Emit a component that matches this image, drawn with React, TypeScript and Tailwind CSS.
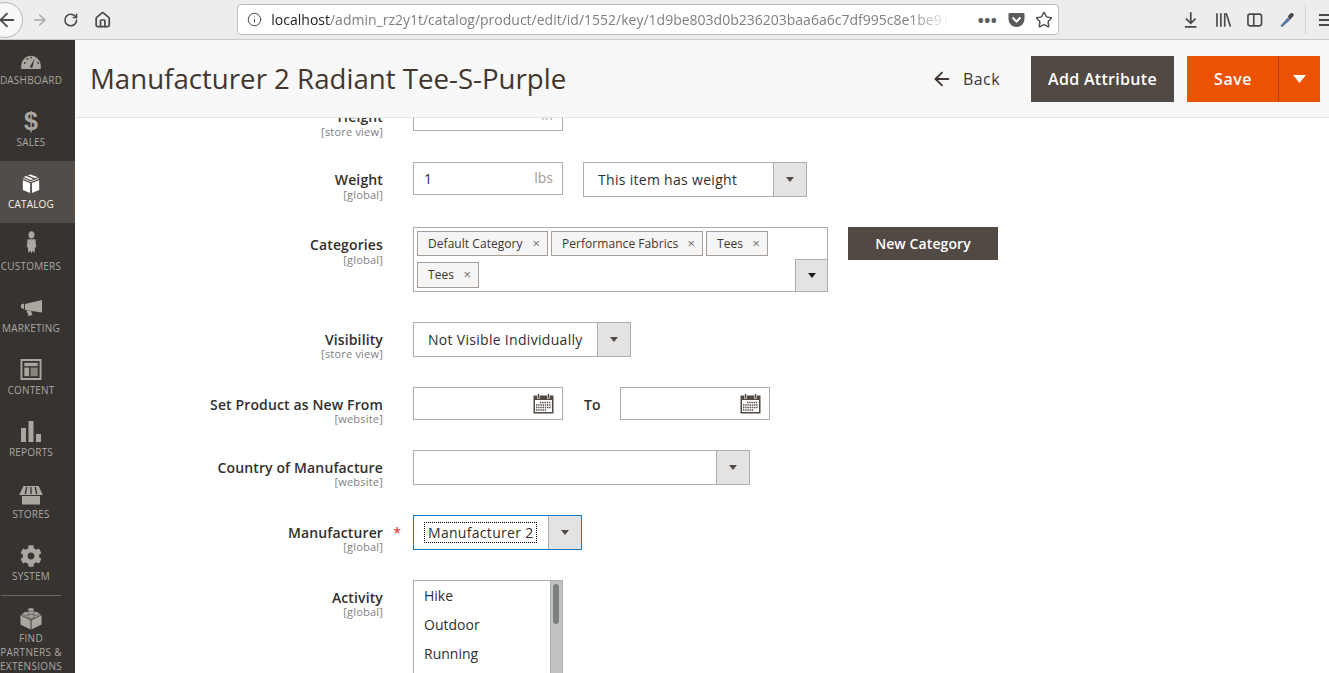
import type { ReactNode } from "react";
import { ArrowLeft, ArrowRight, House, Info, RotateCw, Star } from "lucide-react";
import { FaCog } from "react-icons/fa";

const fieldBorder = "border border-[#adadad]";

function Dashboard() {
  return (
    <svg width="22" height="16" viewBox="0 0 24 18">
      <path d="M1 17 V13 A11 11 0 0 1 23 13 V17 Z" fill="#aaa6a0" />
      <path d="M10.5 15 L16 5 L13.5 15.5 Z" fill="#373330" />
      <circle cx="5" cy="10" r="1" fill="#373330" />
      <circle cx="8" cy="5.5" r="1" fill="#373330" />
      <circle cx="12" cy="4" r="1" fill="#373330" />
      <circle cx="20" cy="10" r="1" fill="#373330" />
    </svg>
  );
}

function Box() {
  return (
    <svg width="20" height="20" viewBox="0 0 20 22" fill="#fff">
      <path d="M1 7 L9 10 V21 L1 17.5 Z" />
      <path d="M11 10 L19 7 V17.5 L11 21 Z" />
      <path d="M6.5 1.5 L9.5 0.5 L17.5 3.6 L14.5 4.8 Z" />
      <path d="M4.5 2.2 L12.6 5.5 L10 6.6 L2 3.4 Z" />
      <path d="M1.5 4.4 L10 8 L18.5 4.5 L18.5 5.5 L10 8.8 L1.5 5.5 Z" />
    </svg>
  );
}

function Person() {
  return (
    <svg width="11" height="23" viewBox="0 0 14 24" preserveAspectRatio="none" fill="#aaa6a0" className="mb-[2px]">
      <circle cx="7" cy="4" r="3.8" />
      <path d="M2 8.5 H12 L13 17 H11.5 L11 23 L8.5 20.5 L7 23.5 L5.5 20.5 L3 23 L2.5 17 H1 Z" />
    </svg>
  );
}

function Megaphone() {
  return (
    <svg width="21" height="16" viewBox="0 0 21 16" fill="#aaa6a0" className="mb-[2px]">
      <path d="M0 4.5 L3 3.5 V9 L0 8 Z" />
      <path d="M4 4 L21 0 V12.5 L4 10 Z" />
      <path d="M5.5 10.5 L10 11 L11.5 15 L7.5 16 Z" />
    </svg>
  );
}

function Content() {
  return (
    <svg width="22" height="21" viewBox="0 0 22 22" fill="#aaa6a0">
      <path fillRule="evenodd" d="M0 0 H22 V22 H0 Z M2 2 V20 H20 V2 Z" />
      <rect x="4" y="4" width="14" height="3.5" />
      <rect x="4" y="9" width="5" height="9" />
      <rect x="10.5" y="9" width="7.5" height="9" opacity="0.7" />
    </svg>
  );
}

function Reports() {
  return (
    <svg width="20" height="21" viewBox="0 0 20 21" fill="#aaa6a0">
      <rect x="0" y="7" width="5" height="14" />
      <rect x="7.5" y="0" width="5" height="21" />
      <rect x="15" y="13" width="5" height="8" />
    </svg>
  );
}

function Stores() {
  return (
    <svg width="24" height="19" viewBox="0 0 25 20" fill="#aaa6a0" className="-mb-px">
      <path d="M4.5 0 H20.5 L25 9.5 H0 Z" />
      <path d="M8 1 L6.5 8.5 M12.5 1 V8.5 M17 1 L18.5 8.5" stroke="#373330" strokeWidth="1.4" />
      <path d="M3 10.5 H22 V19.5 H3 Z" />
    </svg>
  );
}

function Lego() {
  return (
    <svg width="22" height="23" viewBox="0 0 24 25" fill="#aaa6a0">
      <path d="M0.5 9 L11.5 14.5 V24.5 L0.5 19 Z" />
      <path d="M12.5 14.5 L23.5 9 V19 L12.5 24.5 Z" />
      <path d="M12 3 L23 8.5 L12 13.5 L1 8.5 Z" />
      <ellipse cx="12" cy="2.8" rx="3.4" ry="2" stroke="#373330" strokeWidth="0.6" />
      <ellipse cx="6.5" cy="7" rx="3.4" ry="2" stroke="#373330" strokeWidth="0.6" />
      <ellipse cx="17.5" cy="7" rx="3.4" ry="2" stroke="#373330" strokeWidth="0.6" />
      <ellipse cx="12" cy="10" rx="3.4" ry="2" stroke="#373330" strokeWidth="0.6" />
    </svg>
  );
}

function Calendar() {
  return (
    <svg width="21" height="21" viewBox="0 0 21 21">
      <rect x="0.5" y="2.5" width="20" height="18" fill="#514943" />
      <rect x="2" y="7" width="17" height="12" fill="#fff" />
      <rect x="4.5" y="0.5" width="2" height="5" fill="#514943" stroke="#fff" strokeWidth="0.6" />
      <rect x="14.5" y="0.5" width="2" height="5" fill="#514943" stroke="#fff" strokeWidth="0.6" />
      <path d="M7 9.5 H18 M3 12 H18 M3 14.5 H18 M3 17 H14" stroke="#514943" strokeWidth="1.4" strokeDasharray="1.4 0.8" />
    </svg>
  );
}

function Caret({ color = "#514943", width = 8, height = 5 }: { color?: string; width?: number; height?: number }) {
  return (
    <svg width={width} height={height} viewBox="0 0 9 6" preserveAspectRatio="none">
      <path d="M0 0 H9 L4.5 6 Z" fill={color} />
    </svg>
  );
}

function NavItem({ label, icon, active }: { label: ReactNode; icon: ReactNode; active?: boolean }) {
  return (
    <div className={`h-[62px] shrink-0 ${active ? "bg-[#524d49] text-[#f7f3eb]" : "text-[#aaa6a0]"}`}>
      <div className="flex h-full w-[62px] flex-col items-center justify-end pb-[12px]">
        <div className="flex h-[26px] items-end">{icon}</div>
        <div className="mt-[3px] text-[10px] leading-[14px] tracking-[0.2px] whitespace-nowrap">{label}</div>
      </div>
    </div>
  );
}

function Sidebar() {
  return (
    <aside className="flex w-[75px] shrink-0 flex-col overflow-hidden bg-[#373330]">
      <div className="-mt-[3px] flex flex-col">
        <NavItem label="DASHBOARD" icon={<Dashboard />} />
        <NavItem
          label="SALES"
          icon={<span className="font-['Liberation_Sans',sans-serif] text-[25px] leading-[22px] font-bold">$</span>}
        />
        <NavItem label="CATALOG" icon={<Box />} active />
        <NavItem label="CUSTOMERS" icon={<Person />} />
        <NavItem label="MARKETING" icon={<Megaphone />} />
        <NavItem label="CONTENT" icon={<Content />} />
        <NavItem label="REPORTS" icon={<Reports />} />
        <NavItem label="STORES" icon={<Stores />} />
        <NavItem label="SYSTEM" icon={<FaCog size={22} className="-mb-px" />} />
      </div>
      <div className="ml-px h-px w-[60px] bg-[#6b6763]" />
      <div className="mt-[11px] flex w-[62px] flex-col items-center text-[#aaa6a0]">
        <Lego />
        <div className="mt-[1px] text-center text-[10px] leading-[14px] tracking-[0.3px] whitespace-nowrap">
          FIND
          <br />
          PARTNERS &amp;
          <br />
          EXTENSIONS
        </div>
      </div>
    </aside>
  );
}

function BrowserBar() {
  return (
    <header className="relative flex h-[40px] shrink-0 items-center border-b border-[#c9c9c9] bg-[#ededed] text-[#4a4a4a]">
      <div className="absolute top-[2px] -left-[13px] flex h-[36px] w-[36px] items-center justify-end rounded-full border border-[#b5b5b5] bg-[#f8f8f8] pr-[4px]">
        <ArrowLeft size={22} strokeWidth={2} />
      </div>
      <ArrowRight size={18} strokeWidth={1.8} className="ml-[31px] text-[#a5a5a5]" />
      <RotateCw size={16} strokeWidth={2.4} className="ml-[15px]" />
      <House size={18} strokeWidth={2.4} className="ml-[15px]" />
      <div className="ml-[126px] flex h-[31px] w-[822px] shrink-0 items-center rounded-[4px] border border-[#bcbcbc] bg-white pl-[9px]">
        <Info size={15} strokeWidth={1.6} />
        <div className="ml-[9px] w-[680px] overflow-hidden text-[14px] leading-[20px] whitespace-nowrap text-[#7f7f7f] [mask-image:linear-gradient(to_right,black_94%,transparent)]">
          <span className="text-[#222]">localhost</span>
          /admin_rz2y1t/catalog/product/edit/id/1552/key/1d9be803d0b236203baa6a6c7df995c8e1be91
        </div>
        <div className="ml-auto flex items-center pr-[5px]">
          <span className="text-[16px] leading-[10px] font-bold tracking-[0.5px] text-[#5a5a5a]">•••</span>
          <svg width="17" height="16" viewBox="0 0 17 16" className="ml-[11px]">
            <path d="M1.5 1 H15.5 Q16.5 1 16.5 2 V7 A8 8 0 0 1 0.5 7 V2 Q0.5 1 1.5 1 Z" fill="#5a5a5a" />
            <path d="M4.5 5.5 L8.5 9.5 L12.5 5.5" stroke="#fff" strokeWidth="2" fill="none" />
          </svg>
          <Star size={18} strokeWidth={1.9} className="ml-[10px]" />
        </div>
      </div>
      <svg width="14" height="16" viewBox="0 0 14 16" className="ml-[125px]" fill="none" stroke="#4a4a4a" strokeWidth="1.8">
        <path d="M7 0 V11 M2 6.5 L7 11.5 L12 6.5 M1 15 H13" />
      </svg>
      <svg width="16" height="14" viewBox="0 0 16 14" className="ml-[18px]" fill="none" stroke="#4a4a4a" strokeWidth="1.7">
        <path d="M1 0 V14 M5 0 V14 M9 0 V14 M10.5 0 L15 14" />
      </svg>
      <svg width="16" height="14" viewBox="0 0 16 14" className="ml-[16px]" fill="none" stroke="#4a4a4a" strokeWidth="1.7">
        <rect x="1" y="1" width="14" height="12" rx="2" />
        <path d="M7 1 V13" />
      </svg>
      <svg width="16" height="16" viewBox="0 0 16 16" className="ml-[16px]">
        <path d="M2 14 L9 6 L11 8 L3 15 Z" fill="#4a86d8" stroke="#555" strokeWidth="0.8" />
        <path d="M9 4 L12 1 Q14 0 15 2 Q16 3 14 5 L11 8 Z" fill="#4a4a4a" />
      </svg>
      <div className="ml-[11px] h-[29px] w-px bg-[#d0d0d0]" />
      <div className="ml-[13px] flex w-[10px] flex-col gap-[3px]">
        <div className="h-[2px] bg-[#4a4a4a]" />
        <div className="h-[2px] bg-[#4a4a4a]" />
        <div className="h-[2px] bg-[#4a4a4a]" />
      </div>
    </header>
  );
}

function PageHeader() {
  return (
    <div className="z-10 flex h-[78px] shrink-0 items-center border-b border-[#e3e3e3] bg-[#f8f8f8] pr-[9px] pl-[15px]">
      <h1 className="-mt-[2px] text-[27.65px] leading-[36px] font-normal text-[#41362f]">Manufacturer 2 Radiant Tee-S-Purple</h1>
      <div className="ml-auto flex items-center text-[#41362f]">
        <ArrowLeft size={22} strokeWidth={2} />
        <span className="ml-[10px] text-[16px] tracking-[0.4px]">Back</span>
      </div>
      <button className="ml-[31px] h-[46px] w-[143px] bg-[#514943] text-[16px] font-semibold tracking-[0.3px] text-white">
        Add Attribute
      </button>
      <div className="ml-[13px] flex h-[46px] w-[133px] bg-[#eb5202] text-white">
        <div className="flex w-[91px] items-center justify-center pl-[1px] text-[16px] font-semibold tracking-[0.5px]">Save</div>
        <div className="flex flex-1 items-center justify-center border-l border-[#b84002]">
          <Caret color="#fff" width={13} height={8} />
        </div>
      </div>
    </div>
  );
}

function Row({
  label,
  scope,
  required,
  labelTop = "pt-[10px]",
  scopeTop = "",
  children,
}: {
  label: string;
  scope: string;
  required?: boolean;
  labelTop?: string;
  scopeTop?: string;
  children: ReactNode;
}) {
  return (
    <div className="flex items-start">
      <div className={`relative h-[33px] w-[308px] shrink-0 text-right ${labelTop}`}>
        <div className="text-[14px] leading-[16px] font-semibold tracking-[0.13px] text-[#303030]">{label}</div>
        <div className={`text-[11px] leading-[12px] tracking-[0.2px] text-[#808080] ${scopeTop}`}>[{scope}]</div>
        {required && (
          <span className="absolute top-[8px] -right-[18px] text-[14px] leading-[20px] text-[#e22626]">*</span>
        )}
      </div>
      <div className="ml-[30px] flex items-start">{children}</div>
    </div>
  );
}

function Select({
  width,
  value,
  focused,
  className = "",
}: {
  width: string;
  value?: string;
  focused?: boolean;
  className?: string;
}) {
  return (
    <div className={`flex h-[35px] bg-white ${width} ${focused ? "border border-[#1979c3]" : fieldBorder} ${className}`}>
      <div className="flex flex-1 items-center pl-[10px] text-[14px] tracking-[0.3px] text-[#303030]">
        {focused ? (
          <span className="border border-dotted border-black px-[3px] leading-[19px]">{value}</span>
        ) : (
          <span className="pl-[4px]">{value}</span>
        )}
      </div>
      <div className="flex w-[33px] items-center justify-center border-l border-[#adadad] bg-[#e3e3e3]">
        <Caret />
      </div>
    </div>
  );
}

function Tag({ label, width, tall }: { label: string; width: string; tall?: boolean }) {
  return (
    <div
      className={`flex items-center justify-between border border-[#a79d95] bg-[#f5f5f5] pr-[7px] pl-[10px] text-[12px] tracking-[0.05px] text-[#41362f] ${
        tall ? "h-[26px]" : "h-[25px]"
      } ${width}`}
    >
      <span>{label}</span>
      <span className="text-[13px] text-[#6f6f6f]">×</span>
    </div>
  );
}

function DateInput() {
  return (
    <div className={`flex h-[33px] w-[150px] items-center justify-end bg-white pr-[8px] ${fieldBorder}`}>
      <Calendar />
    </div>
  );
}

function ProductForm() {
  return (
    <div className="-mt-[20px] flex flex-col gap-[30px] bg-white">
      <div className="mb-px">
        <Row label="Height" scope="store view" labelTop="pt-[11px]" scopeTop="mt-[1px]">
          <div className={`flex h-[33px] w-[150px] items-center justify-end pr-[9px] text-[14px] text-[#adadad] ${fieldBorder}`}>
            in
          </div>
        </Row>
      </div>
      <Row label="Weight" scope="global" scopeTop="mt-[1px]">
        <div className={`flex h-[33px] w-[150px] items-center justify-between pr-[9px] pl-[10px] text-[14px] text-[#303030] ${fieldBorder}`}>
          <span>1</span>
          <span className="-mt-[2px] text-[#a89a90]">lbs</span>
        </div>
        <Select width="w-[224px]" value="This item has weight" className="ml-[20px]" />
      </Row>
      <Row label="Categories" scope="global" scopeTop="mt-[1px]">
        <div className={`relative flex h-[65px] w-[415px] flex-wrap content-start gap-x-[3px] gap-y-[6px] bg-white pt-[3px] pl-[3px] ${fieldBorder}`}>
          <Tag label="Default Category" width="w-[131px]" />
          <Tag label="Performance Fabrics" width="w-[152px]" />
          <Tag label="Tees" width="w-[62px]" />
          <Tag label="Tees" width="w-[62px]" tall />
          <div className="absolute -right-px -bottom-px flex h-[33px] w-[33px] items-center justify-center border border-[#adadad] bg-[#e3e3e3]">
            <Caret color="#1a1a1a" />
          </div>
        </div>
        <button className="ml-[20px] h-[33px] w-[150px] bg-[#514943] text-[14px] font-semibold tracking-[0.1px] text-white">
          New Category
        </button>
      </Row>
      <Row label="Visibility" scope="store view">
        <Select width="w-[218px]" value="Not Visible Individually" />
      </Row>
      <Row label="Set Product as New From" scope="website">
        <DateInput />
        <span className="mx-[21px] mt-[8px] w-[15px] text-[14px] leading-[20px] font-semibold text-[#303030]">To</span>
        <DateInput />
      </Row>
      <Row label="Country of Manufacture" scope="website">
        <Select width="w-[337px]" />
      </Row>
      <Row label="Manufacturer" scope="global" required>
        <Select width="w-[169px]" value="Manufacturer 2" focused />
      </Row>
      <Row label="Activity" scope="global">
        <div className={`flex h-[200px] w-[150px] bg-white ${fieldBorder}`}>
          <div className="flex-1 pl-[10px] text-[14px] leading-[29px] text-[#303030]">
            <div>Hike</div>
            <div>Outdoor</div>
            <div>Running</div>
          </div>
          <div className="w-[12px] border-l border-[#adadad] bg-[#c1c1c1] pt-[3px] pl-[2px]">
            <div className="h-[40px] w-[6px] rounded-[3px] bg-[#7b7f80]" />
          </div>
        </div>
      </Row>
    </div>
  );
}

export default function App() {
  return (
    <div className="flex h-[673px] w-[1329px] flex-col overflow-hidden bg-white font-['Open_Sans',sans-serif]">
      <BrowserBar />
      <div className="flex min-h-0 flex-1">
        <Sidebar />
        <main className="flex min-w-0 flex-1 flex-col overflow-hidden">
          <PageHeader />
          <ProductForm />
        </main>
      </div>
    </div>
  );
}
